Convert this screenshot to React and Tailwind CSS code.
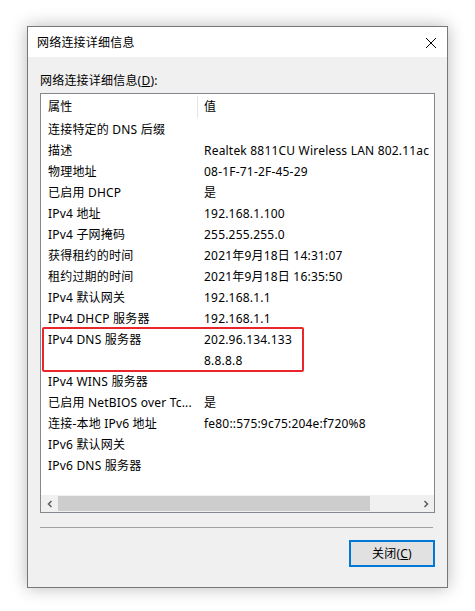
import React from 'react'

const FONT = { fontFamily: '"Noto Sans", "Noto Sans CJK SC", sans-serif' }

const ROWS = [
  ['连接特定的 DNS 后缀', ''],
  ['描述', 'Realtek 8811CU Wireless LAN 802.11ac'],
  ['物理地址', '08-1F-71-2F-45-29'],
  ['已启用 DHCP', '是'],
  ['IPv4 地址', '192.168.1.100'],
  ['IPv4 子网掩码', '255.255.255.0'],
  ['获得租约的时间', '2021年9月18日 14:31:07'],
  ['租约过期的时间', '2021年9月18日 16:35:50'],
  ['IPv4 默认网关', '192.168.1.1'],
  ['IPv4 DHCP 服务器', '192.168.1.1'],
  ['IPv4 DNS 服务器', '202.96.134.133'],
  ['', '8.8.8.8'],
  ['IPv4 WINS 服务器', ''],
  ['已启用 NetBIOS over Tc...', '是'],
  ['连接-本地 IPv6 地址', 'fe80::575:9c75:204e:f720%8'],
  ['IPv6 默认网关', ''],
  ['IPv6 DNS 服务器', ''],
]

function Row({ name, value }) {
  return (
    <div className="flex h-[21px] items-center pt-[2px] text-[12px] text-black">
      <div className="w-[156px] shrink-0 overflow-hidden whitespace-nowrap pl-[7px] pr-[2px]">{name}</div>
      <div className="flex-1 whitespace-nowrap pl-[7px]">{value}</div>
    </div>
  )
}

export default function App() {
  return (
    <div className="min-h-[611px] w-[475px] bg-white pl-[27px] pt-[26px] tracking-[0.2px]" style={FONT}>
      <div className="flex h-[562px] w-[421px] flex-col border border-[#777] bg-[#f0f0f0] shadow-[0_0_16px_rgba(0,0,0,0.28)]">
        {/* title bar */}
        <div className="flex h-[30px] shrink-0 items-center justify-between bg-white pl-[9px] pr-[9px] pt-[2px]">
          <span className="text-[12px] text-black">网络连接详细信息</span>
          <svg width="12" height="12" viewBox="0 0 12 12" className="mr-[1px]">
            <path d="M1 1L11 11M11 1L1 11" stroke="#000" strokeWidth="1" />
          </svg>
        </div>

        <div className="flex flex-1 flex-col px-[12px]">
          <div className="mt-[15px] h-[18px] text-[12px] leading-[18px] text-black">
            网络连接详细信息(<span className="underline">D</span>):
          </div>

          {/* list view */}
          <div className="relative mt-[3px] flex h-[420px] flex-col border border-[#828790] bg-white">
            <div className="flex h-[24px] items-center pt-[2px] text-[12px] text-black">
              <div className="w-[156px] shrink-0 pl-[7px]">属性</div>
              <div className="h-[22px] w-px bg-[#e5e5e5]" />
              <div className="pl-[6px]">值</div>
            </div>
            {ROWS.map(([n, v], i) => (
              <Row key={i} name={n} value={v} />
            ))}
            <div className="flex-1" />
            {/* horizontal scrollbar */}
            <div className="flex h-[17px] items-center bg-[#f0f0f0]">
              <div className="flex h-[17px] w-[17px] items-center justify-center">
                <svg width="8" height="8" viewBox="0 0 8 8">
                  <path d="M5.5 1L2.5 4L5.5 7" stroke="#606060" strokeWidth="1.6" fill="none" />
                </svg>
              </div>
              <div className="h-[15px] w-[312px] bg-[#cdcdcd]" />
              <div className="flex-1" />
              <div className="flex h-[17px] w-[17px] items-center justify-center">
                <svg width="8" height="8" viewBox="0 0 8 8">
                  <path d="M2.5 1L5.5 4L2.5 7" stroke="#606060" strokeWidth="1.6" fill="none" />
                </svg>
              </div>
            </div>

            <div className="absolute left-[1px] top-[233px] h-[45px] w-[262px] rounded-[2px] border-2 border-[#e8262b]" />
          </div>

          <div className="mt-[14px] h-px w-[393px] bg-[#a0a0a0]" />

          <div className="mt-[12px] flex justify-end">
            <button className="flex h-[27px] w-[86px] items-center justify-center border-2 border-[#0078d7] bg-[#e1e1e1] pt-[1px] text-[12px] text-black">
              关闭(<span className="underline">C</span>)
            </button>
          </div>
        </div>
      </div>
    </div>
  )
}
